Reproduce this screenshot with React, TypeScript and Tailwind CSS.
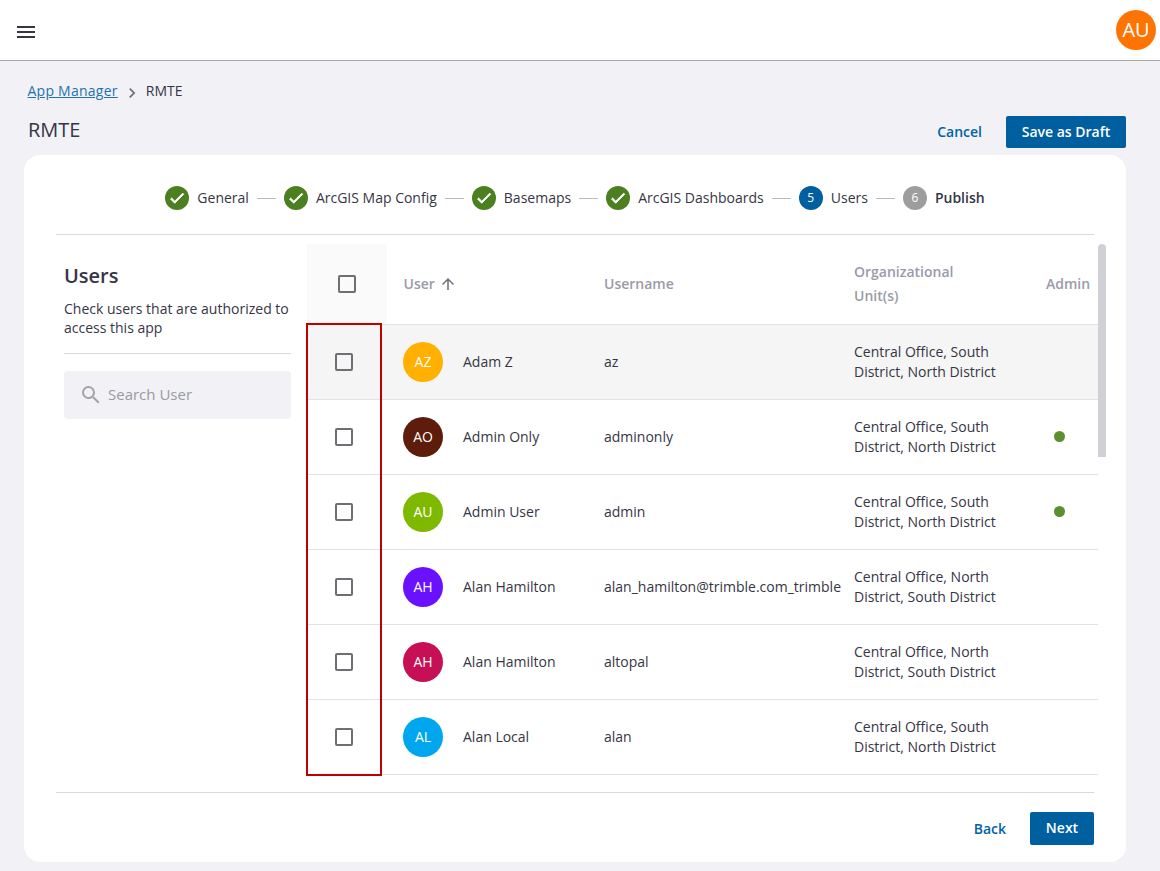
const users = [
  { initials: "AZ", color: "bg-[#ffb000]", name: "Adam Z", username: "az", org: ["Central Office, South", "District, North District"], admin: false, hover: true },
  { initials: "AO", color: "bg-[#5e1c0a]", name: "Admin Only", username: "adminonly", org: ["Central Office, South", "District, North District"], admin: true },
  { initials: "AU", color: "bg-[#7eb900]", name: "Admin User", username: "admin", org: ["Central Office, South", "District, North District"], admin: true },
  { initials: "AH", color: "bg-[#6a11ff]", name: "Alan Hamilton", username: "alan_hamilton@trimble.com_trimble", org: ["Central Office, North", "District, South District"], admin: false },
  { initials: "AH", color: "bg-[#c70f55]", name: "Alan Hamilton", username: "altopal", org: ["Central Office, North", "District, South District"], admin: false },
  { initials: "AL", color: "bg-[#00a7ee]", name: "Alan Local", username: "alan", org: ["Central Office, South", "District, North District"], admin: false },
];

const steps = [
  { label: "General", done: true },
  { label: "ArcGIS Map Config", done: true },
  { label: "Basemaps", done: true },
  { label: "ArcGIS Dashboards", done: true },
  { label: "Users", num: 5, active: true },
  { label: "Publish", num: 6 },
];

function CheckIcon() {
  return (
    <svg viewBox="0 0 24 24" className="h-[18px] w-[18px] fill-white stroke-white stroke-[1.2]">
      <path d="M9 16.17L4.83 12l-1.42 1.41L9 19 21 7l-1.41-1.41z" />
    </svg>
  );
}

function Checkbox() {
  return <div className="h-[18px] w-[18px] rounded-[2px] border-2 border-[#6e6e73]" />;
}

export default function App() {
  return (
    <div className="relative flex h-[871px] flex-col overflow-hidden bg-[#f1f1f6] font-['Open_Sans',sans-serif] text-sm text-[#363545]">
      <header className="flex h-[61px] shrink-0 items-center justify-between border-b border-[#a9a9ad] bg-white pl-[14px] pr-1">
        <svg viewBox="0 0 24 24" className="mt-1 h-6 w-6 fill-[#363545]">
          <path d="M3 18h18v-2H3v2zm0-5h18v-2H3v2zm0-7v2h18V6H3z" />
        </svg>
        <div className="flex h-10 w-10 items-center justify-center rounded-full bg-[#ff7300] text-[20px] text-white">AU</div>
      </header>

      <div className="flex items-center px-[27.5px] pt-[20px] leading-[20px]">
        <span className="tracking-[0.25px] text-[#1f73ad] underline">App Manager</span>
        <svg viewBox="0 0 24 24" className="mx-1 mb-[-2px] mt-[2px] h-5 w-5 fill-[#6a6e79]">
          <path d="M8.59 16.59L13.17 12 8.59 7.41 10 6l6 6-6 6z" />
        </svg>
        <span>RMTE</span>
      </div>

      <div className="mt-[14px] flex h-[33px] items-center justify-between pl-[28px] pr-[34px]">
        <h1 className="mb-1 text-[20px] font-normal leading-[28px]">RMTE</h1>
        <div className="flex items-center">
          <span className="font-semibold text-[#0063a3]">Cancel</span>
          <button className="ml-6 flex h-8 w-[120px] items-center justify-center rounded-[2px] bg-[#005f9e] font-semibold text-white">
            Save as Draft
          </button>
        </div>
      </div>

      <main className="ml-6 mr-[34px] mt-[7px] flex h-[707px] flex-col rounded-2xl bg-white px-8">
        <div className="flex h-[80px] shrink-0 items-center justify-center border-b border-[#d8d8dd] pt-[7px]">
          {steps.map((s, i) => (
            <div key={s.label} className="flex items-center">
              {i > 0 && <div className="mx-2 h-px w-[19px] bg-[#b7b9c3]" />}
              <div
                className={`flex h-6 w-6 items-center justify-center rounded-full text-xs text-white ${
                  s.done ? "bg-[#4b7f20]" : s.active ? "bg-[#005f9e]" : "bg-[#9d9d9d]"
                }`}
              >
                {s.done ? <CheckIcon /> : s.num}
              </div>
              <span className={`ml-2 ${s.label === "Publish" ? "font-semibold" : ""}`}>{s.label}</span>
            </div>
          ))}
        </div>

        <div className="flex min-h-0 flex-1 pt-[9px]">
          <aside className="ml-2 w-[227px] shrink-0">
            <h2 className="mt-[18px] text-[20px] font-semibold leading-[28px]">Users</h2>
            <p className="mt-[9px] border-b border-[#d8d8dd] pb-[16px] leading-[19px]">
              Check users that are authorized to access this app
            </p>
            <div className="mt-[17px] flex h-12 items-center rounded bg-[#f1f1f6] pl-[15px] text-[15px] text-[#9a9aa3]">
              <svg viewBox="0 0 24 24" className="h-6 w-6 fill-[#a3a3a8]">
                <path d="M15.5 14h-.79l-.28-.27A6.471 6.471 0 0 0 16 9.5 6.5 6.5 0 1 0 9.5 16c1.61 0 3.09-.59 4.23-1.57l.27.28v.79l5 4.99L20.49 19l-4.99-5zm-6 0C7.01 14 5 11.99 5 9.5S7.01 5 9.5 5 14 7.01 14 9.5 11.99 14 9.5 14z" />
              </svg>
              <span className="ml-[5px]">Search User</span>
            </div>
          </aside>

          <div className="ml-4 flex h-[531px] w-[799px] shrink-0">
            <div className="w-[791px] shrink-0">
              <div className="grid h-[81px] grid-cols-[80px_217px_250px_192px_52px] items-center border-b border-[#e0e1e9] font-semibold text-[#9a9aa8]">
                <div className="flex h-full items-center justify-center bg-[#fafafa]">
                  <Checkbox />
                </div>
                <div className="flex items-center pl-[16.5px]">
                  User
                  <svg viewBox="0 0 24 24" className="ml-1 h-[18px] w-[18px] fill-[#6a6e79]">
                    <path d="M4 12l1.41 1.41L11 7.83V20h2V7.83l5.58 5.59L20 12l-8-8-8 8z" />
                  </svg>
                </div>
                <div>Username</div>
                <div className="leading-[24px]">
                  Organizational
                  <br />
                  Unit(s)
                </div>
                <div>Admin</div>
              </div>

              {users.map((u) => (
                <div
                  key={u.name + u.username}
                  className={`grid h-[75px] grid-cols-[74px_223px_250px_192px_52px] items-center border-b border-[#e0e1e9] ${
                    u.hover ? "bg-[#f5f5f5]" : ""
                  }`}
                >
                  <div className="flex justify-center">
                    <Checkbox />
                  </div>
                  <div className="flex items-center pl-[22px]">
                    <div className={`flex h-10 w-10 items-center justify-center rounded-full text-white ${u.color}`}>
                      {u.initials}
                    </div>
                    <span className="ml-5">{u.name}</span>
                  </div>
                  <div className="whitespace-nowrap">{u.username}</div>
                  <div className="leading-[20px]">
                    {u.org[0]}
                    <br />
                    {u.org[1]}
                  </div>
                  <div className="pb-[2px] pl-[8px]">
                    {u.admin && <div className="h-[11px] w-[11px] rounded-full bg-[#5c8f2f]" />}
                  </div>
                </div>
              ))}
            </div>
            <div className="h-[213px] w-2 shrink-0 rounded-t bg-[#d0d0d6]" />
          </div>
        </div>

        <div className="flex h-[70px] shrink-0 items-start justify-end border-t border-[#d8d8dd] pt-[19px]">
          <div className="flex items-center">
            <span className="font-semibold text-[#0063a3]">Back</span>
            <button className="ml-6 flex h-[33px] w-16 items-center justify-center rounded-[2px] bg-[#005f9e] pb-[2px] font-semibold text-white">
              Next
            </button>
          </div>
        </div>
      </main>

      {/* review annotation around the checkbox column */}
      <div className="absolute left-[306px] top-[323px] h-[453px] w-[76px] border-2 border-[#c00000]" />
    </div>
  );
}
